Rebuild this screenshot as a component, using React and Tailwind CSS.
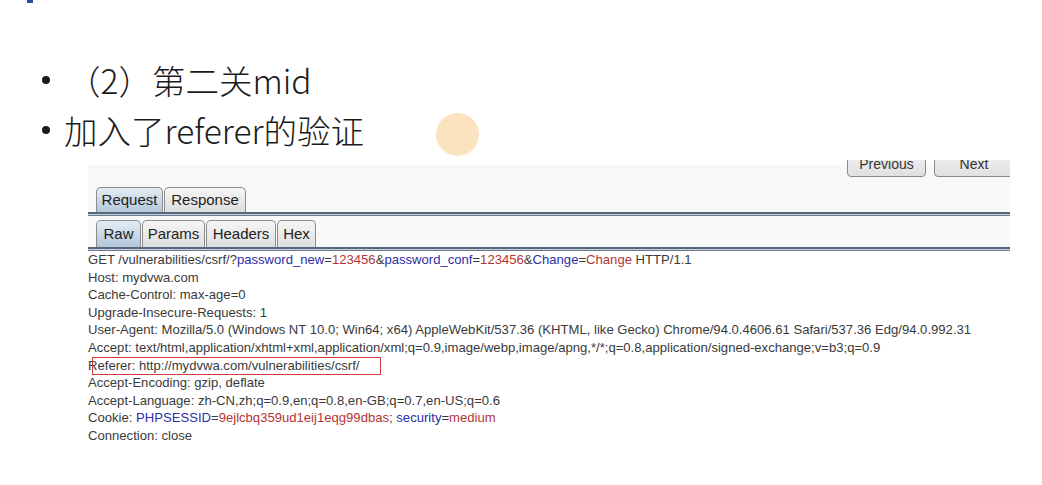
const B = ({ children }) => <span className="text-[#2e2ea6]">{children}</span>;
const R = ({ children }) => <span className="text-[#b53535]">{children}</span>;

const Tab = ({ label, w, active, h }) => (
  <div
    className={`${w} ${h} flex items-center justify-center rounded-t-[5px] border border-b-0 border-[#8c8c8c] text-[15px] text-[#222] ${
      active
        ? "bg-[linear-gradient(to_bottom,#e3ecf4,#b3c7da)]"
        : "bg-[linear-gradient(to_bottom,#f6f6f6,#dedede)]"
    }`}
  >
    {label}
  </div>
);

const TabLine = () => (
  <div className="flex flex-col">
    <div className="h-[2px] bg-[#56667c]" />
    <div className="h-[1px] bg-[#c9d1db]" />
    <div className="h-[1px] bg-[#6b7a8f]" />
  </div>
);

export default function App() {
  return (
    <div
      className="relative w-[1042px] h-[485px] bg-white overflow-hidden flex flex-col"
      style={{ fontFamily: "'Liberation Sans', Arial, sans-serif" }}
    >
      <div className="h-[4px] flex">
        <div className="ml-[27px] w-[6px] h-[3px] bg-[#2b4c9c]" />
      </div>

      <div
        className="mt-[51px] flex flex-col text-[33.5px] font-light leading-[50px] text-[#1b1b1b]"
        style={{ fontFamily: "'Noto Sans CJK SC', 'Noto Sans', sans-serif" }}
      >
        <div className="flex items-center">
          <span className="ml-[42px] w-[8px] h-[8px] rounded-full bg-[#1b1b1b]" />
          <span className="ml-[17px]">（2）第二关mid</span>
        </div>
        <div className="flex items-center">
          <span className="ml-[42px] w-[8px] h-[8px] rounded-full bg-[#1b1b1b]" />
          <span className="ml-[14px]">加入了referer的验证</span>
        </div>
      </div>

      <div className="absolute left-[436px] top-[113px] w-[43px] h-[43px] rounded-full bg-[#fce3bf]" />

      <div className="mt-[5px] ml-[88px] w-[922px] flex flex-col">
        <div className="bg-[#f8f8f8] flex flex-col">
          <div className="h-[17px] overflow-hidden flex items-end justify-end gap-[8px] bg-[linear-gradient(to_bottom,white_5px,#f8f8f8_5px)]">
            <div className="w-[79px] h-[26px] shrink-0 flex items-center justify-center rounded-[4px] border border-[#8a8a8a] bg-[linear-gradient(to_bottom,#f2f2f2,#e0e0e0)] text-[14px] text-[#333]">
              Previous
            </div>
            <div className="w-[80px] h-[26px] shrink-0 mr-[-4px] flex items-center justify-center rounded-[4px] border border-[#8a8a8a] bg-[linear-gradient(to_bottom,#f2f2f2,#e0e0e0)] text-[14px] text-[#333]">
              Next
            </div>
          </div>

          <div className="mt-[10px] ml-[8px] flex gap-[1px]">
            <Tab label="Request" w="w-[67px]" h="h-[25px]" active />
            <Tab label="Response" w="w-[82px]" h="h-[25px]" />
          </div>
          <TabLine />

          <div className="mt-[4px] ml-[8px] flex gap-[1px]">
            <Tab label="Raw" w="w-[45px]" h="h-[27px]" active />
            <Tab label="Params" w="w-[63px]" h="h-[27px]" />
            <Tab label="Headers" w="w-[70px]" h="h-[27px]" />
            <Tab label="Hex" w="w-[39px]" h="h-[27px]" />
          </div>
          <TabLine />
        </div>

        <div className="flex flex-col text-[13.1px] leading-[17.6px] text-[#3a3a3a] whitespace-nowrap">
          <div>
            GET /vulnerabilities/csrf/?<B>password_new</B>=<R>123456</R>&amp;
            <B>password_conf</B>=<R>123456</R>&amp;<B>Change</B>=<R>Change</R> HTTP/1.1
          </div>
          <div>Host: mydvwa.com</div>
          <div>Cache-Control: max-age=0</div>
          <div>Upgrade-Insecure-Requests: 1</div>
          <div>
            User-Agent: Mozilla/5.0 (Windows NT 10.0; Win64; x64) AppleWebKit/537.36 (KHTML, like Gecko)
            Chrome/94.0.4606.61 Safari/537.36 Edg/94.0.992.31
          </div>
          <div>
            Accept:
            text/html,application/xhtml+xml,application/xml;q=0.9,image/webp,image/apng,*/*;q=0.8,application/signed-exchange;v=b3;q=0.9
          </div>
          <div className="relative">
            Referer: http://mydvwa.com/vulnerabilities/csrf/
            <div className="absolute left-[4px] top-0 w-[289px] h-[18px] border-[1.5px] border-[#d23b3b]" />
          </div>
          <div>Accept-Encoding: gzip, deflate</div>
          <div>Accept-Language: zh-CN,zh;q=0.9,en;q=0.8,en-GB;q=0.7,en-US;q=0.6</div>
          <div>
            Cookie: <B>PHPSESSID</B>=<R>9ejlcbq359ud1eij1eqg99dbas</R>; <B>security</B>=<R>medium</R>
          </div>
          <div>Connection: close</div>
        </div>
      </div>
    </div>
  );
}
